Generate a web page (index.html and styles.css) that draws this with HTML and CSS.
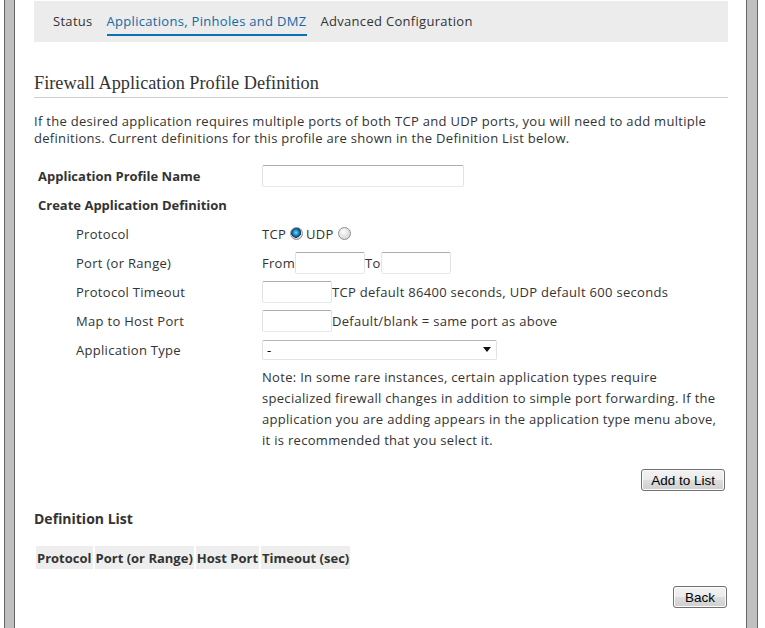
FILE: index.html
```html
<!DOCTYPE html>
<html>
<head>
<meta charset="utf-8">
<link rel="stylesheet" href="styles.css">
</head>
<body>
<div class="frame">
  <div class="rail rail-left"></div>
  <main class="content">
    <nav class="tabs">
      <a class="tab">Status</a>
      <a class="tab active">Applications, Pinholes and DMZ</a>
      <a class="tab">Advanced Configuration</a>
    </nav>
    <h1 class="title">Firewall Application Profile Definition</h1>
    <p class="intro">If the desired application requires multiple ports of both TCP and UDP ports, you will need to add multiple definitions. Current definitions for this profile are shown in the Definition List below.</p>

    <div class="form">
      <div class="row first">
        <label class="lbl strong">Application Profile Name</label>
        <div class="val"><input class="text wide" type="text"></div>
      </div>
      <div class="row">
        <label class="lbl strong">Create Application Definition</label>
      </div>
      <div class="row">
        <label class="lbl sub">Protocol</label>
        <div class="val">TCP <input class="radio" type="radio" name="p" checked> UDP <input class="radio" type="radio" name="p"></div>
      </div>
      <div class="row">
        <label class="lbl sub">Port (or Range)</label>
        <div class="val">From<input class="text small" type="text">To<input class="text small" type="text"></div>
      </div>
      <div class="row">
        <label class="lbl sub">Protocol Timeout</label>
        <div class="val"><input class="text small" type="text">TCP default 86400 seconds, UDP default 600 seconds</div>
      </div>
      <div class="row">
        <label class="lbl sub">Map to Host Port</label>
        <div class="val"><input class="text small" type="text">Default/blank = same port as above</div>
      </div>
      <div class="row">
        <label class="lbl sub">Application Type</label>
        <div class="val"><div class="select"><span>-</span><span class="caret"></span></div></div>
      </div>
      <div class="note">Note: In some rare instances, certain application types require specialized firewall changes in addition to simple port forwarding. If the application you are adding appears in the application type menu above, it is recommended that you select it.</div>
    </div>

    <div class="actions add"><button class="btn">Add to List</button></div>

    <h2 class="subhead">Definition List</h2>
    <table class="deflist">
      <tr><th>Protocol</th><th>Port (or Range)</th><th>Host Port</th><th>Timeout (sec)</th></tr>
    </table>

    <div class="actions back"><button class="btn wide-pad">Back</button></div>
  </main>
  <div class="rail rail-right"></div>
</div>
</body>
</html>
```

FILE: styles.css
```css
html, body {
  margin: 0;
  padding: 0;
  background: #fff;
}
body {
  font-family: "Open Sans", "DejaVu Sans", sans-serif;
  font-size: 13px;
  letter-spacing: 0.3px;
  color: #333;
}
.frame {
  display: flex;
  height: 628px;
  overflow: hidden;
}
.rail {
  background: #c0c0c0;
  border-left: 1px solid #666;
  border-right: 1px solid #666;
  height: 100%;
  box-sizing: border-box;
}
.rail-left {
  margin-left: 4px;
  width: 11px;
}
.rail-right {
  margin-left: 18px;
  width: 12px;
}
.content {
  margin-left: 19px;
  width: 694px;
}
.tabs {
  margin-top: 1px;
  height: 41px;
  background: #ececec;
  display: flex;
  align-items: flex-start;
  padding-left: 19px;
  gap: 14px;
  box-sizing: border-box;
}
.tab {
  margin-top: 11px;
  line-height: 19px;
  padding-bottom: 3px;
  color: #333;
}
.tab.active {
  color: #1569a3;
  border-bottom: 2px solid #0b72b5;
}
.title {
  font-family: "Liberation Serif", "Times New Roman", serif;
  font-weight: normal;
  font-size: 18.3px;
  letter-spacing: 0;
  color: #333;
  margin: 30px 0 0;
  padding-bottom: 3px;
  border-bottom: 1px solid #ccc;
  line-height: 22px;
}
.intro {
  margin: 15px 0 0;
  line-height: 17px;
}
.form {
  margin-top: 15px;
  padding-left: 4px;
}
.row {
  display: flex;
  align-items: center;
  height: 29px;
}
.row.first { height: 28px; }
.lbl {
  width: 224px;
  flex: none;
}
.lbl.strong { font-weight: bold; letter-spacing: 0; }
.lbl.sub { padding-left: 38px; box-sizing: border-box; }
.val {
  display: flex;
  align-items: center;
}
.text {
  height: 22px;
  box-sizing: border-box;
  border: 1px solid #e2e3ea;
  border-top-color: #abadb3;
  border-bottom-color: #e3e9ef;
  border-radius: 2px;
  margin: 0;
  padding: 0 3px;
  font: inherit;
}
.text.wide { width: 202px; }
.text.small { width: 70px; }
.radio {
  appearance: none;
  -webkit-appearance: none;
  width: 13px;
  height: 13px;
  margin: 0 3px 0 4px;
  border-radius: 50%;
  border: 1px solid #8f8f8f;
  background: radial-gradient(circle at 40% 35%, #fdfdfd 0, #d8d8d8 70%, #c4c4c4 100%);
  box-sizing: border-box;
}
.radio:checked {
  background:
    radial-gradient(circle at 45% 42%, #7fd8f7 0, #1a8ac4 30%, #0d4a7a 50%, #1f3f5c 56%, transparent 60%),
    radial-gradient(circle at 40% 35%, #fdfdfd 0, #d8d8d8 70%, #c4c4c4 100%);
}
.select {
  width: 235px;
  height: 20px;
  box-sizing: border-box;
  border: 1px solid #e2e3ea;
  border-top-color: #b5b7bd;
  border-radius: 2px;
  display: flex;
  align-items: center;
  justify-content: space-between;
  padding: 0 5px 0 4px;
  color: #000;
}
.caret {
  width: 0;
  height: 0;
  border-left: 4px solid transparent;
  border-right: 4px solid transparent;
  border-top: 5px solid #111;
}
.note {
  margin-left: 224px;
  width: 460px;
  margin-top: 3px;
  line-height: 21px;
}
.actions {
  display: flex;
  justify-content: flex-end;
}
.actions.add { margin-top: 18px; padding-right: 3px; }
.actions.back { margin-top: 15px; padding-right: 1px; }
.btn {
  font-family: "Liberation Sans", Arial, sans-serif;
  font-size: 13.5px;
  letter-spacing: 0;
  color: #000;
  height: 22px;
  padding: 0 9px;
  border: 1px solid #707070;
  border-radius: 3px;
  background: linear-gradient(#f2f2f2 0, #ebebeb 50%, #dddddd 51%, #cfcfcf 100%);
  box-shadow: inset 0 0 0 1px #fcfcfc;
}
.btn.wide-pad { padding: 0 11px; }
.subhead {
  font-size: 14px;
  font-weight: bold;
  letter-spacing: 0;
  margin: 18px 0 0;
  line-height: 20px;
}
.deflist {
  margin-top: 15px;
  border-spacing: 2px;
}
.deflist th {
  background: #eeeeee;
  height: 23px;
  padding: 0 1px;
  font-weight: bold;
  letter-spacing: 0;
  color: #333;
}
```
